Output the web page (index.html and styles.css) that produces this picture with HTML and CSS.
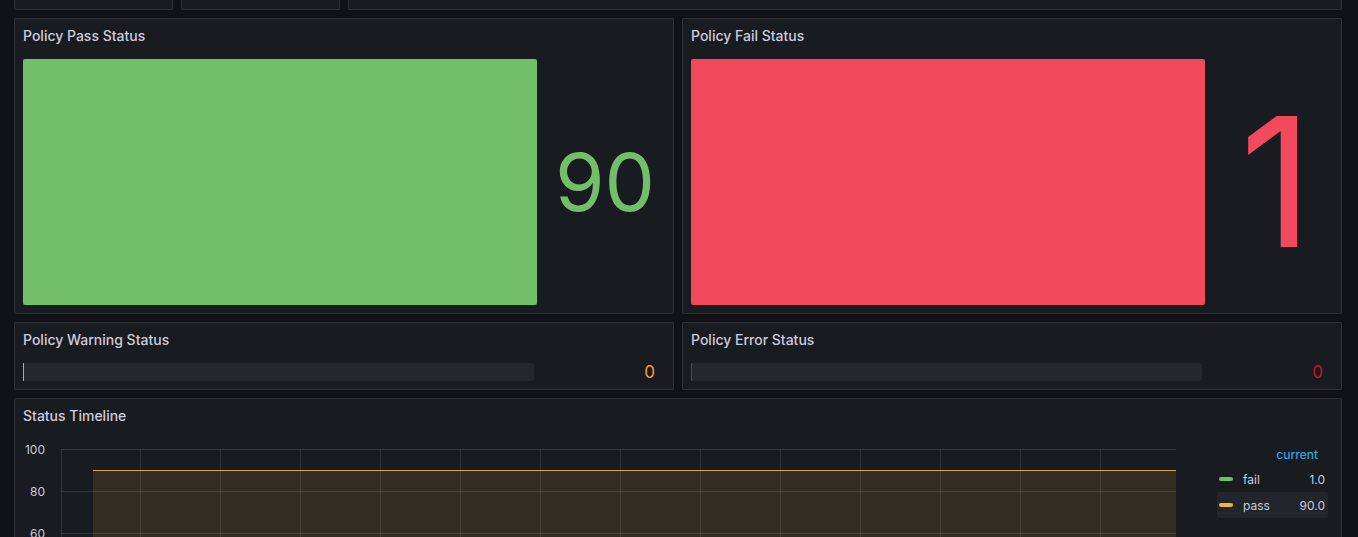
FILE: index.html
```html
<!DOCTYPE html>
<html lang="en">
<head>
<meta charset="utf-8">
<title>Policy Dashboard</title>
<link rel="stylesheet" href="styles.css">
</head>
<body>
<main class="dashboard">
  <div class="row row-top">
    <div class="panel"></div>
    <div class="panel"></div>
    <div class="panel"></div>
  </div>

  <div class="row row-2col row-big">
    <section class="panel">
      <header class="panel-header"><h2 class="panel-title">Policy Pass Status</h2></header>
      <div class="panel-body">
        <div class="bargauge">
          <div class="bar bar-pass"></div>
          <div class="bg-value bg-value-big value-pass">90</div>
        </div>
      </div>
    </section>
    <section class="panel">
      <header class="panel-header"><h2 class="panel-title">Policy Fail Status</h2></header>
      <div class="panel-body">
        <div class="bargauge">
          <div class="bar bar-fail"></div>
          <div class="bg-value bg-value-huge value-fail">1</div>
        </div>
      </div>
    </section>
  </div>

  <div class="row row-2col row-small">
    <section class="panel">
      <header class="panel-header"><h2 class="panel-title">Policy Warning Status</h2></header>
      <div class="panel-body">
        <div class="bargauge">
          <div class="track"><div class="track-fill fill-warn"></div></div>
          <div class="bg-value bg-value-small value-warn">0</div>
        </div>
      </div>
    </section>
    <section class="panel">
      <header class="panel-header"><h2 class="panel-title">Policy Error Status</h2></header>
      <div class="panel-body">
        <div class="bargauge">
          <div class="track"><div class="track-fill fill-err"></div></div>
          <div class="bg-value bg-value-small value-err">0</div>
        </div>
      </div>
    </section>
  </div>

  <div class="row row-timeline">
    <section class="panel">
      <header class="panel-header"><h2 class="panel-title">Status Timeline</h2></header>
      <div class="panel-body timeline-body">
        <svg class="chart" width="1153" height="260" viewBox="0 0 1153 260">
          <rect class="area" x="70" y="31" width="1083" height="229"></rect>
          <g class="grid">
            <line x1="38" y1="10.5" x2="1153" y2="10.5"></line>
            <line x1="38" y1="52.5" x2="1153" y2="52.5"></line>
            <line x1="38" y1="94.5" x2="1153" y2="94.5"></line>
            <line x1="38" y1="136.5" x2="1153" y2="136.5"></line>
            <line x1="38" y1="178.5" x2="1153" y2="178.5"></line>
            <line x1="38" y1="220.5" x2="1153" y2="220.5"></line>
            <line x1="38.5" y1="10" x2="38.5" y2="260"></line>
            <line x1="117.5" y1="10" x2="117.5" y2="260"></line>
            <line x1="197.5" y1="10" x2="197.5" y2="260"></line>
            <line x1="277.5" y1="10" x2="277.5" y2="260"></line>
            <line x1="357.5" y1="10" x2="357.5" y2="260"></line>
            <line x1="437.5" y1="10" x2="437.5" y2="260"></line>
            <line x1="517.5" y1="10" x2="517.5" y2="260"></line>
            <line x1="597.5" y1="10" x2="597.5" y2="260"></line>
            <line x1="677.5" y1="10" x2="677.5" y2="260"></line>
            <line x1="757.5" y1="10" x2="757.5" y2="260"></line>
            <line x1="837.5" y1="10" x2="837.5" y2="260"></line>
            <line x1="917.5" y1="10" x2="917.5" y2="260"></line>
            <line x1="997.5" y1="10" x2="997.5" y2="260"></line>
            <line x1="1077.5" y1="10" x2="1077.5" y2="260"></line>
          </g>
          <line class="series-pass" x1="70" y1="31.5" x2="1153" y2="31.5"></line>
          <g class="axis-labels">
            <text x="22" y="10.5">100</text>
            <text x="22" y="52.5">80</text>
            <text x="22" y="94.5">60</text>
          </g>
        </svg>
        <div class="legend">
          <div class="legend-head">current</div>
          <div class="legend-row">
            <span class="swatch swatch-fail"></span>
            <span class="legend-name">fail</span>
            <span class="legend-val">1.0</span>
          </div>
          <div class="legend-row is-hover">
            <span class="swatch swatch-pass"></span>
            <span class="legend-name">pass</span>
            <span class="legend-val">90.0</span>
          </div>
        </div>
      </div>
    </section>
  </div>
</main>
</body>
</html>
```

FILE: styles.css
```css
html, body {
  margin: 0;
  padding: 0;
  height: 100%;
  overflow: hidden;
  background: #111217;
}

body {
  font-family: Inter, "Noto Sans", sans-serif;
  color: #ccccdc;
}

.dashboard {
  display: flex;
  flex-direction: column;
  gap: 8px;
  padding: 0 16px 0 14px;
  margin-top: -90px;
}

.row-top {
  display: grid;
  grid-template-columns: 159px 159px 1fr;
  gap: 8px;
  height: 100px;
}

.row-2col {
  display: grid;
  grid-template-columns: 1fr 1fr;
  gap: 8px;
}

.row-big { height: 296px; }
.row-small { height: 68px; }
.row-timeline { height: 330px; display: flex; flex-direction: column; }
.row-timeline .panel { flex: 1; }

.panel {
  box-sizing: border-box;
  background: #181b1f;
  border: 1px solid rgba(204, 204, 220, 0.12);
  border-radius: 2px;
  display: flex;
  flex-direction: column;
  min-width: 0;
  overflow: hidden;
}

.panel-header {
  flex: none;
  height: 32px;
  padding: 0 8px;
  display: flex;
  align-items: center;
}

.panel-title {
  margin: 0;
  font-size: 14px;
  font-weight: 500;
  color: #ccccdc;
  white-space: nowrap;
}

.panel-body {
  flex: 1;
  min-height: 0;
  padding: 8px;
  display: flex;
}

/* bar gauges */
.bargauge {
  flex: 1;
  display: flex;
  min-width: 0;
}

.bar {
  flex: 1;
  border-radius: 2px;
}

.bar-pass { background: #73bf69; }
.bar-fail { background: #f2495c; }

.track {
  flex: 1;
  background: rgba(204, 204, 220, 0.07);
  border-radius: 2px;
  display: flex;
}

.track-fill { width: 1px; }
.fill-warn { background: #ff9830; }
.fill-err { background: #c4162a; }

.bg-value {
  box-sizing: border-box;
  display: flex;
  align-items: center;
  justify-content: flex-end;
  padding-right: 10px;
  line-height: 1;
  font-weight: 400;
}

.bg-value-big { width: 128px; font-size: 80px; }
.bg-value-huge { width: 128px; font-size: 180px; padding-right: 20px; }
.bg-value-small { width: 131px; font-size: 17px; }

.value-pass { color: #73bf69; }
.value-fail { color: #f2495c; }
.value-warn { color: #ff9830; }
.value-err { color: #c4162a; }

/* timeline */
.timeline-body {
  align-items: flex-start;
}

.chart {
  flex: none;
  display: block;
}

.chart .area {
  fill: #eab839;
  fill-opacity: 0.12;
}

.chart .grid line {
  stroke: rgba(204, 204, 220, 0.15);
  stroke-width: 1;
}

.chart .series-pass {
  stroke: #d9a82e;
  stroke-width: 1;
}

.chart .axis-labels text {
  font-family: Inter, "Noto Sans", sans-serif;
  font-size: 12px;
  fill: #ccccdc;
  text-anchor: end;
  dominant-baseline: central;
}

.legend {
  margin-left: auto;
  margin-right: 5px;
  margin-top: 3px;
  width: 111px;
  font-size: 12px;
}

.legend-head {
  height: 24px;
  display: flex;
  align-items: center;
  justify-content: flex-end;
  padding-right: 10px;
  color: #33a2e5;
  font-weight: 500;
}

.legend-row {
  height: 26px;
  display: flex;
  align-items: center;
  padding: 0 3px 0 2px;
  border-radius: 2px;
}

.legend-row.is-hover { background: #22252b; }

.swatch {
  width: 14px;
  height: 4px;
  border-radius: 2px;
  margin-right: 10px;
  flex: none;
}

.swatch-fail { background: #73bf69; }
.swatch-pass { background: #eab839; }

.legend-val { margin-left: auto; }
```
